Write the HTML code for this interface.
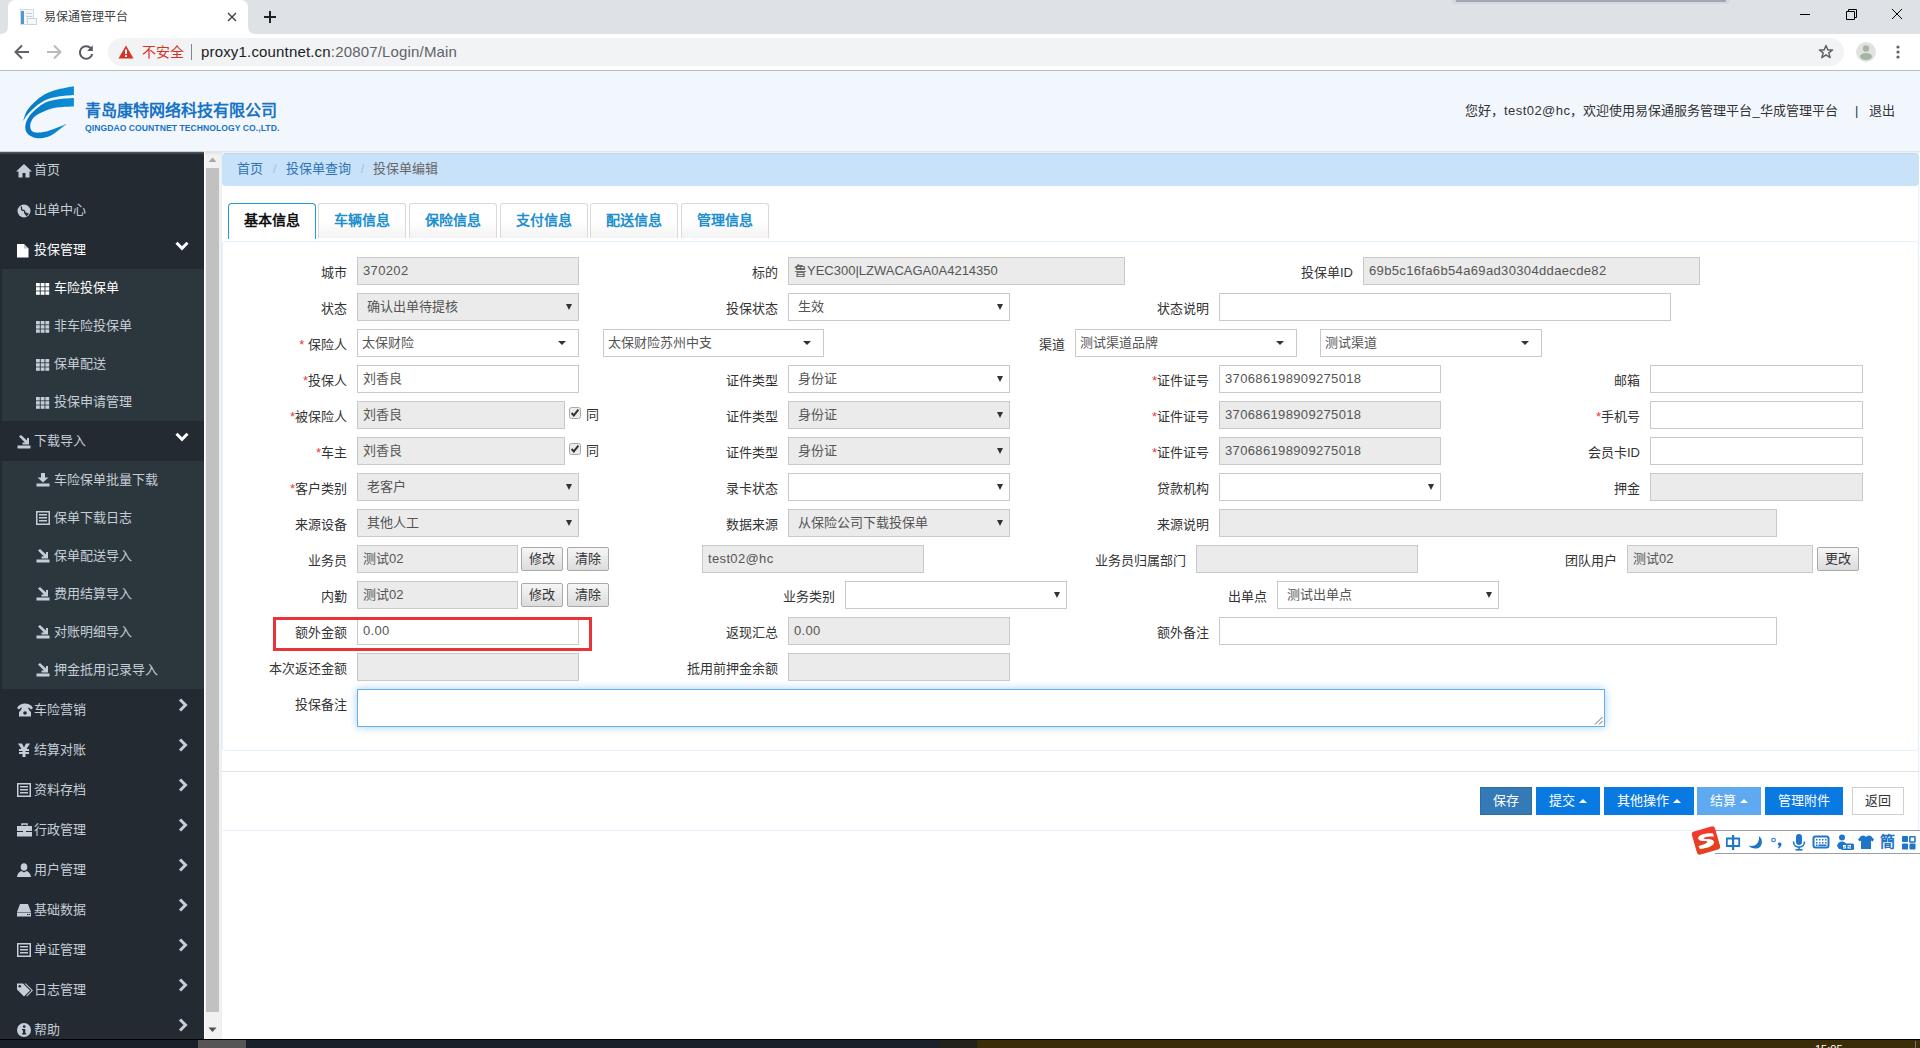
<!DOCTYPE html>
<html lang="zh-CN"><head><meta charset="utf-8"><title>易保通管理平台</title>
<style>
*{box-sizing:border-box;margin:0;padding:0}
html,body{width:1920px;height:1048px;overflow:hidden;background:#fff;font-family:"Liberation Sans",sans-serif;color:#333}
.a{position:absolute}
/* chrome */
#tabs{left:0;top:0;width:1920px;height:34px;background:#dee1e6}
#tab{left:8px;top:0;width:240px;height:34px;background:#fff;border-radius:8px 8px 0 0}
#toolbar{left:0;top:34px;width:1920px;height:36px;background:#fff}
#omni{left:108px;top:38px;width:1736px;height:28px;background:#f1f3f4;border-radius:14px}
#tbline{left:0;top:70px;width:1920px;height:1px;background:#b9bbbe}
/* header */
#hdr{left:0;top:71px;width:1920px;height:81px;background:#f2f7fe}
/* sidebar */
#side{left:0;top:152px;width:204px;height:887px;background:#232a31}
#sbar{left:204px;top:152px;width:17px;height:887px;background:#f1f1f1;border-left:1px solid #fff}
#content{left:221px;top:152px;width:1699px;height:887px;background:#fff}
#taskbar{left:0;top:1039px;width:1920px;height:9px;background:#1b212b;border-top:1px solid #000}
.mi{position:absolute;left:0;width:204px;height:40px;font-size:14px;color:#c5ccd3;line-height:40px}
.mi .ic{position:absolute;left:17px;top:13px;width:14px;height:14px}
.mi .t{position:absolute;left:34px;top:0}
.mi .chev{position:absolute;left:176px;top:0}
.sm{position:absolute;left:2px;width:202px;background:#2c363d}
.si{position:absolute;left:0;width:202px;height:38px;line-height:38px;font-size:13px;color:#c5ccd3}
.si .ic{position:absolute;left:35px;top:13px;width:12px;height:12px}
.si .t{position:absolute;left:52px;top:0}
/* form */
.lb{position:absolute;font-size:13px;color:#333;text-align:right;line-height:28px;height:28px;white-space:nowrap}
.lb i{font-style:normal;color:#e4393c}
.in{position:absolute;height:28px;border:1px solid #c9c9c9;background:#fff;font-size:13px;color:#555;line-height:26px;padding-left:5px;white-space:nowrap;overflow:hidden}
.dis{background:#ebebeb}
.sel::after{content:"";position:absolute;right:6px;top:10px;border-left:3px solid transparent;border-right:3px solid transparent;border-top:6px solid #333}
.sel2::after{content:"";position:absolute;right:12px;top:11px;border-left:4px solid transparent;border-right:4px solid transparent;border-top:4.5px solid #333}
.sel2{padding-left:4px}
.asc{letter-spacing:0.35px}
.btn{position:absolute;height:24px;border:1px solid #a9a9a9;border-radius:2px;background:linear-gradient(#f6f6f6,#dcdcdc);font-size:13px;color:#333;line-height:22px;text-align:center}
</style></head>
<body>

<div id="tabs" class="a"></div>
<svg class="a" style="left:0;top:0" width="270" height="34" viewBox="0 0 270 34">
<path d="M0 34 Q8 34 8 26 L8 8 Q8 0 16 0 L240 0 Q248 0 248 8 L248 26 Q248 34 256 34 Z" fill="#fff"/>
</svg>
<svg class="a" style="left:20px;top:9px" width="17" height="17" viewBox="0 0 17 17">
<rect x="0.5" y="0.5" width="13" height="15" fill="#f4f6f8" stroke="#d6dbe0"/>
<rect x="1" y="2" width="3" height="13" fill="#4a9ad8"/>
<rect x="6" y="4" width="6" height="1" fill="#ccd"/><rect x="6" y="7" width="6" height="1" fill="#ccd"/>
<rect x="7.5" y="9.5" width="9" height="6" fill="#f7f8fa" stroke="#ccd2d8"/>
</svg>
<div class="a" style="left:44px;top:9px;font-size:12px;color:#3c4043;line-height:16px">易保通管理平台</div>
<svg class="a" style="left:227px;top:12px" width="10" height="10" viewBox="0 0 10 10"><path d="M1 1L9 9M9 1L1 9" stroke="#3c4043" stroke-width="1.4"/></svg>
<svg class="a" style="left:263px;top:10px" width="14" height="14" viewBox="0 0 14 14"><path d="M7 1V13M1 7H13" stroke="#222" stroke-width="2"/></svg>
<svg class="a" style="left:1798px;top:8px" width="110" height="14" viewBox="0 0 110 14">
<path d="M2 6.5H12" stroke="#000" stroke-width="1"/>
<path d="M48.5 3.5H56.5V11.5H48.5Z M50.5 3.5V1.5H58.5V9.5H56.5" stroke="#000" stroke-width="1" fill="none"/>
<path d="M94 1L104 11M104 1L94 11" stroke="#000" stroke-width="1"/>
</svg>
<div class="a" style="left:1452px;top:0;width:278px;height:4px;background:#d6d7dd;border-radius:0 0 4px 4px"></div><div class="a" style="left:1456px;top:0;width:270px;height:1.5px;background:#a4a4b2"></div>
<div id="toolbar" class="a"></div>
<svg class="a" style="left:12px;top:42px" width="90" height="20" viewBox="0 0 90 20">
<path d="M17 10H4M10 3.5L3.5 10L10 16.5" stroke="#5f6368" stroke-width="2" fill="none"/>
<path d="M35 10H48M42 3.5L48.5 10L42 16.5" stroke="#b8babd" stroke-width="2" fill="none"/>
<path d="M78.8 6.2A6.3 6.3 0 1 0 80.3 12" stroke="#5a5866" stroke-width="2" fill="none"/>
<path d="M80.8 3.2V8.9H75.1Z" fill="#5a5866"/>
</svg>
<div id="omni" class="a"></div>
<svg class="a" style="left:118px;top:45px" width="16" height="14" viewBox="0 0 16 14"><path d="M8 0.5L15.5 13.5H0.5Z" fill="#d93025"/><rect x="7" y="4.5" width="2" height="4.5" fill="#fff"/><rect x="7" y="10" width="2" height="2" fill="#fff"/></svg>
<div class="a" style="left:142px;top:42px;font-size:14px;color:#d93025;line-height:20px">不安全</div>
<div class="a" style="left:191px;top:44px;width:1px;height:16px;background:#80868b"></div>
<div class="a" style="left:201px;top:42px;font-size:15px;color:#202124;line-height:20px;white-space:nowrap;letter-spacing:0.17px">proxy1.countnet.cn<span style="color:#5f6368">:20807/Login/Main</span></div>
<svg class="a" style="left:1818px;top:44px" width="16" height="16" viewBox="0 0 16 16"><path d="M8 1.5L9.9 6H14.6L10.8 8.9L12.2 13.6L8 10.8L3.8 13.6L5.2 8.9L1.4 6H6.1Z" fill="none" stroke="#5f6368" stroke-width="1.5" stroke-linejoin="round"/></svg>
<svg class="a" style="left:1856px;top:42px" width="20" height="20" viewBox="0 0 20 20"><circle cx="10" cy="10" r="10" fill="#e2e3e1"/><circle cx="10" cy="6.5" r="3.2" fill="#a7b5a5"/><ellipse cx="10" cy="14.5" rx="6" ry="3.5" fill="#a7b5a5"/></svg>
<svg class="a" style="left:1895px;top:44px" width="6" height="16" viewBox="0 0 6 16"><circle cx="3" cy="3" r="1.6" fill="#5f6368"/><circle cx="3" cy="8" r="1.6" fill="#5f6368"/><circle cx="3" cy="13" r="1.6" fill="#5f6368"/></svg>
<div id="tbline" class="a"></div>

<div id="hdr" class="a"></div>
<svg class="a" style="left:15px;top:80px" width="80" height="65" viewBox="0 0 80 65">
<defs><linearGradient id="lg" x1="0" x2="1"><stop offset="0" stop-color="#0b78c4"/><stop offset="1" stop-color="#0a8fd4"/></linearGradient></defs>
<path d="M58.9 6.2 C56.3 6.7 48.2 8.0 43.4 9.3 C38.5 10.7 33.9 12.0 29.8 14.3 C25.7 16.6 21.6 20.1 18.6 22.9 C15.6 25.7 13.6 28.0 11.8 31.0 C10.1 34.0 8.7 39.3 8.1 41.0 L8.1 41.0 C8.8 40.0 10.3 37.1 12.4 34.7 C14.5 32.3 17.4 29.2 20.5 26.7 C23.6 24.2 27.2 21.5 31.0 19.8 C34.8 18.1 38.8 17.2 43.4 16.4 C48.0 15.6 56.3 15.2 58.9 14.9 Z" fill="url(#lg)"/>
<path d="M58.9 18.0 C56.3 18.2 48.0 18.5 43.4 19.2 C38.8 19.9 34.7 20.6 31.0 22.3 C27.3 24.0 24.0 26.6 21.1 29.1 C18.2 31.6 15.4 34.6 13.6 37.2 C11.8 39.8 10.9 42.4 10.5 44.7 C10.1 47.0 10.3 49.1 10.9 50.9 C11.5 52.6 12.7 54.0 14.3 55.2 C15.9 56.4 18.2 57.4 20.5 57.9 C22.8 58.4 25.1 58.5 27.9 58.0 C30.7 57.5 33.3 57.1 37.2 54.8 C41.1 52.5 49.1 45.8 51.5 44.0 L51.5 44.0 C49.6 44.8 43.6 47.2 40.0 48.5 C36.4 49.8 33.2 51.1 30.0 51.8 C26.8 52.5 23.2 52.8 21.0 52.6 C18.8 52.4 17.5 51.7 16.5 50.5 C15.5 49.3 15.1 47.2 15.2 45.5 C15.3 43.8 16.0 41.7 17.0 40.0 C18.0 38.3 18.7 37.1 21.0 35.5 C23.3 33.9 27.3 31.9 31.0 30.5 C34.7 29.1 38.8 28.0 43.4 27.3 C48.0 26.6 56.3 26.5 58.9 26.4 Z" fill="url(#lg)"/>
</svg>
<div class="a" style="left:85px;top:101px;font-size:16px;font-weight:bold;color:#1873c4;line-height:20px;white-space:nowrap">青岛康特网络科技有限公司</div>
<div class="a" style="left:85px;top:123px;font-size:8.6px;font-weight:bold;color:#1873c4;line-height:10px;white-space:nowrap;letter-spacing:0.05px">QINGDAO COUNTNET TECHNOLOGY CO.,LTD.</div>
<div class="a" style="left:1465px;top:102px;font-size:13px;color:#333;line-height:18px;white-space:nowrap">您好，<span style="letter-spacing:0.45px">test02@hc</span>，欢迎使用易保通服务管理平台_华成管理平台</div>
<div class="a" style="left:1855px;top:102px;font-size:13px;color:#333;line-height:18px">|</div>
<div class="a" style="left:1869px;top:102px;font-size:13px;color:#333;line-height:18px">退出</div>
<div id="side" class="a"></div>
<div class="a" style="left:0;top:151px;width:204px;height:4px;background:linear-gradient(rgba(200,200,200,.9),rgba(140,140,140,.35) 40%,rgba(35,42,49,0))"></div>
<svg class="a" style="left:16px;top:164px" width="16" height="14" viewBox="0 0 16 14"><path d="M8 0L16 7.5H13.5V13.5H9.5V9H6.5V13.5H2.5V7.5H0Z" fill="#c5ced6"/></svg>
<div class="a" style="left:34px;top:161px;font-size:13px;line-height:18px;color:#c5ced6;font-weight:normal;white-space:nowrap">首页</div>
<svg class="a" style="left:17px;top:204px" width="14" height="14" viewBox="0 0 14 14"><circle cx="7" cy="7" r="6.5" fill="#c5ced6"/><path d="M4 2.5C5 3.5 4 5 5 6C6 7 7 5.5 7.5 7C8 8 7 9 8.5 10L9.5 11.5L11 10C10 9 9 9.5 8.5 8.5" fill="none" stroke="#232a31" stroke-width="1.3"/></svg>
<div class="a" style="left:34px;top:201px;font-size:13px;line-height:18px;color:#c5ced6;font-weight:normal;white-space:nowrap">出单中心</div>
<svg class="a" style="left:17px;top:244px" width="12" height="14" viewBox="0 0 12 14"><path d="M0 0H7L11.5 4.5V13.5H0Z" fill="#fff"/><path d="M7 0V4.5H11.5" fill="#8a9096" opacity=".5"/></svg>
<div class="a" style="left:34px;top:241px;font-size:13px;line-height:18px;color:#fff;font-weight:normal;white-space:nowrap">投保管理</div>
<svg class="a" style="left:175px;top:241px" width="14" height="10" viewBox="0 0 14 10"><path d="M1.5 1.8L7 7.3L12.5 1.8" stroke="#fff" stroke-width="3" fill="none"/></svg>
<div class="a" style="left:2px;top:269px;width:202px;height:152px;background:#2c363d"></div>
<svg class="a" style="left:36px;top:283px" width="14" height="13" viewBox="0 0 14 13"><rect x="0.0" y="0.0" width="3.8" height="3.4" fill="#fff"/><rect x="0.0" y="4.2" width="3.8" height="3.4" fill="#fff"/><rect x="0.0" y="8.4" width="3.8" height="3.4" fill="#fff"/><rect x="4.7" y="0.0" width="3.8" height="3.4" fill="#fff"/><rect x="4.7" y="4.2" width="3.8" height="3.4" fill="#fff"/><rect x="4.7" y="8.4" width="3.8" height="3.4" fill="#fff"/><rect x="9.4" y="0.0" width="3.8" height="3.4" fill="#fff"/><rect x="9.4" y="4.2" width="3.8" height="3.4" fill="#fff"/><rect x="9.4" y="8.4" width="3.8" height="3.4" fill="#fff"/></svg>
<div class="a" style="left:54px;top:279px;font-size:13px;line-height:18px;color:#fff;font-weight:normal;white-space:nowrap">车险投保单</div>
<svg class="a" style="left:36px;top:321px" width="14" height="13" viewBox="0 0 14 13"><rect x="0.0" y="0.0" width="3.8" height="3.4" fill="#c5ced6"/><rect x="0.0" y="4.2" width="3.8" height="3.4" fill="#c5ced6"/><rect x="0.0" y="8.4" width="3.8" height="3.4" fill="#c5ced6"/><rect x="4.7" y="0.0" width="3.8" height="3.4" fill="#c5ced6"/><rect x="4.7" y="4.2" width="3.8" height="3.4" fill="#c5ced6"/><rect x="4.7" y="8.4" width="3.8" height="3.4" fill="#c5ced6"/><rect x="9.4" y="0.0" width="3.8" height="3.4" fill="#c5ced6"/><rect x="9.4" y="4.2" width="3.8" height="3.4" fill="#c5ced6"/><rect x="9.4" y="8.4" width="3.8" height="3.4" fill="#c5ced6"/></svg>
<div class="a" style="left:54px;top:317px;font-size:13px;line-height:18px;color:#c5ced6;font-weight:normal;white-space:nowrap">非车险投保单</div>
<svg class="a" style="left:36px;top:359px" width="14" height="13" viewBox="0 0 14 13"><rect x="0.0" y="0.0" width="3.8" height="3.4" fill="#c5ced6"/><rect x="0.0" y="4.2" width="3.8" height="3.4" fill="#c5ced6"/><rect x="0.0" y="8.4" width="3.8" height="3.4" fill="#c5ced6"/><rect x="4.7" y="0.0" width="3.8" height="3.4" fill="#c5ced6"/><rect x="4.7" y="4.2" width="3.8" height="3.4" fill="#c5ced6"/><rect x="4.7" y="8.4" width="3.8" height="3.4" fill="#c5ced6"/><rect x="9.4" y="0.0" width="3.8" height="3.4" fill="#c5ced6"/><rect x="9.4" y="4.2" width="3.8" height="3.4" fill="#c5ced6"/><rect x="9.4" y="8.4" width="3.8" height="3.4" fill="#c5ced6"/></svg>
<div class="a" style="left:54px;top:355px;font-size:13px;line-height:18px;color:#c5ced6;font-weight:normal;white-space:nowrap">保单配送</div>
<svg class="a" style="left:36px;top:397px" width="14" height="13" viewBox="0 0 14 13"><rect x="0.0" y="0.0" width="3.8" height="3.4" fill="#c5ced6"/><rect x="0.0" y="4.2" width="3.8" height="3.4" fill="#c5ced6"/><rect x="0.0" y="8.4" width="3.8" height="3.4" fill="#c5ced6"/><rect x="4.7" y="0.0" width="3.8" height="3.4" fill="#c5ced6"/><rect x="4.7" y="4.2" width="3.8" height="3.4" fill="#c5ced6"/><rect x="4.7" y="8.4" width="3.8" height="3.4" fill="#c5ced6"/><rect x="9.4" y="0.0" width="3.8" height="3.4" fill="#c5ced6"/><rect x="9.4" y="4.2" width="3.8" height="3.4" fill="#c5ced6"/><rect x="9.4" y="8.4" width="3.8" height="3.4" fill="#c5ced6"/></svg>
<div class="a" style="left:54px;top:393px;font-size:13px;line-height:18px;color:#c5ced6;font-weight:normal;white-space:nowrap">投保申请管理</div>
<svg class="a" style="left:17px;top:435px" width="14" height="14" viewBox="0 0 14 14"><rect x="0.5" y="10.5" width="13" height="3" fill="#c5ced6"/><path d="M2 1.5L4 0L10 5.5V3H12V9.5H5.5V7.5H8L2 1.5Z" fill="#c5ced6"/></svg>
<div class="a" style="left:34px;top:432px;font-size:13px;line-height:18px;color:#c5ced6;font-weight:normal;white-space:nowrap">下载导入</div>
<svg class="a" style="left:175px;top:432px" width="14" height="10" viewBox="0 0 14 10"><path d="M1.5 1.8L7 7.3L12.5 1.8" stroke="#fff" stroke-width="3" fill="none"/></svg>
<div class="a" style="left:2px;top:461px;width:202px;height:228px;background:#2c363d"></div>
<svg class="a" style="left:36px;top:473px" width="14" height="14" viewBox="0 0 14 14"><rect x="0.5" y="10.5" width="13" height="3" fill="#c5ced6"/><path d="M5 0H9V4.5H12.5L7 9.5L1.5 4.5H5Z" fill="#c5ced6"/></svg>
<div class="a" style="left:54px;top:471px;font-size:13px;line-height:18px;color:#c5ced6;font-weight:normal;white-space:nowrap">车险保单批量下载</div>
<svg class="a" style="left:36px;top:511px" width="14" height="14" viewBox="0 0 14 14"><rect x="0.75" y="0.75" width="12.5" height="12.5" fill="none" stroke="#c5ced6" stroke-width="1.5"/><rect x="3" y="3" width="8" height="1.5" fill="#c5ced6"/><rect x="3" y="6" width="8" height="1.5" fill="#c5ced6"/><rect x="3" y="9" width="8" height="1.5" fill="#c5ced6"/></svg>
<div class="a" style="left:54px;top:509px;font-size:13px;line-height:18px;color:#c5ced6;font-weight:normal;white-space:nowrap">保单下载日志</div>
<svg class="a" style="left:36px;top:549px" width="14" height="14" viewBox="0 0 14 14"><rect x="0.5" y="10.5" width="13" height="3" fill="#c5ced6"/><path d="M2 1.5L4 0L10 5.5V3H12V9.5H5.5V7.5H8L2 1.5Z" fill="#c5ced6"/></svg>
<div class="a" style="left:54px;top:547px;font-size:13px;line-height:18px;color:#c5ced6;font-weight:normal;white-space:nowrap">保单配送导入</div>
<svg class="a" style="left:36px;top:587px" width="14" height="14" viewBox="0 0 14 14"><rect x="0.5" y="10.5" width="13" height="3" fill="#c5ced6"/><path d="M2 1.5L4 0L10 5.5V3H12V9.5H5.5V7.5H8L2 1.5Z" fill="#c5ced6"/></svg>
<div class="a" style="left:54px;top:585px;font-size:13px;line-height:18px;color:#c5ced6;font-weight:normal;white-space:nowrap">费用结算导入</div>
<svg class="a" style="left:36px;top:625px" width="14" height="14" viewBox="0 0 14 14"><rect x="0.5" y="10.5" width="13" height="3" fill="#c5ced6"/><path d="M2 1.5L4 0L10 5.5V3H12V9.5H5.5V7.5H8L2 1.5Z" fill="#c5ced6"/></svg>
<div class="a" style="left:54px;top:623px;font-size:13px;line-height:18px;color:#c5ced6;font-weight:normal;white-space:nowrap">对账明细导入</div>
<svg class="a" style="left:36px;top:663px" width="14" height="14" viewBox="0 0 14 14"><rect x="0.5" y="10.5" width="13" height="3" fill="#c5ced6"/><path d="M2 1.5L4 0L10 5.5V3H12V9.5H5.5V7.5H8L2 1.5Z" fill="#c5ced6"/></svg>
<div class="a" style="left:54px;top:661px;font-size:13px;line-height:18px;color:#c5ced6;font-weight:normal;white-space:nowrap">押金抵用记录导入</div>
<svg class="a" style="left:17px;top:703px" width="16" height="14" viewBox="0 0 16 14"><path d="M0 5C2 1.5 5 0.5 8 0.5C11 0.5 14 1.5 16 5L14 6.5L12 4.5L11 5L12.5 7.5H3.5L5 5L4 4.5L2 6.5Z" fill="#c5ced6"/><path d="M2 13.5V9L5 6.5H11L14 9V13.5Z" fill="#c5ced6"/><circle cx="8" cy="10" r="1.8" fill="#232a31"/></svg>
<div class="a" style="left:34px;top:701px;font-size:13px;line-height:18px;color:#c5ced6;font-weight:normal;white-space:nowrap">车险营销</div>
<svg class="a" style="left:178px;top:698px" width="10" height="14" viewBox="0 0 10 14"><path d="M2 1.5L7.5 7L2 12.5" stroke="#c5ced6" stroke-width="3" fill="none"/></svg>
<svg class="a" style="left:17px;top:743px" width="14" height="14" viewBox="0 0 14 14"><path d="M1 0.5H5L7 4.5L9 0.5H13L9.5 6H12V8H8.5V9H12V11H8.5V14H5.5V11H2V9H5.5V8H2V6H4.5Z" fill="#c5ced6"/></svg>
<div class="a" style="left:34px;top:741px;font-size:13px;line-height:18px;color:#c5ced6;font-weight:normal;white-space:nowrap">结算对账</div>
<svg class="a" style="left:178px;top:738px" width="10" height="14" viewBox="0 0 10 14"><path d="M2 1.5L7.5 7L2 12.5" stroke="#c5ced6" stroke-width="3" fill="none"/></svg>
<svg class="a" style="left:17px;top:783px" width="14" height="14" viewBox="0 0 14 14"><rect x="0.75" y="0.75" width="12.5" height="12.5" fill="none" stroke="#c5ced6" stroke-width="1.5"/><rect x="3" y="3" width="8" height="1.5" fill="#c5ced6"/><rect x="3" y="6" width="8" height="1.5" fill="#c5ced6"/><rect x="3" y="9" width="8" height="1.5" fill="#c5ced6"/></svg>
<div class="a" style="left:34px;top:781px;font-size:13px;line-height:18px;color:#c5ced6;font-weight:normal;white-space:nowrap">资料存档</div>
<svg class="a" style="left:178px;top:778px" width="10" height="14" viewBox="0 0 10 14"><path d="M2 1.5L7.5 7L2 12.5" stroke="#c5ced6" stroke-width="3" fill="none"/></svg>
<svg class="a" style="left:17px;top:823px" width="15" height="14" viewBox="0 0 15 14"><path d="M5 2.5V1H10V2.5" stroke="#c5ced6" stroke-width="1.5" fill="none"/><rect x="0" y="3" width="15" height="5" fill="#c5ced6"/><rect x="0" y="9" width="15" height="4.5" fill="#c5ced6"/><rect x="6" y="7" width="3" height="3" fill="#c5ced6"/></svg>
<div class="a" style="left:34px;top:821px;font-size:13px;line-height:18px;color:#c5ced6;font-weight:normal;white-space:nowrap">行政管理</div>
<svg class="a" style="left:178px;top:818px" width="10" height="14" viewBox="0 0 10 14"><path d="M2 1.5L7.5 7L2 12.5" stroke="#c5ced6" stroke-width="3" fill="none"/></svg>
<svg class="a" style="left:17px;top:863px" width="14" height="14" viewBox="0 0 14 14"><ellipse cx="7" cy="4" rx="3.3" ry="3.8" fill="#c5ced6"/><path d="M0 14C0.5 10 3 8.5 4.5 8L7 9.5L9.5 8C11 8.5 13.5 10 14 14Z" fill="#c5ced6"/></svg>
<div class="a" style="left:34px;top:861px;font-size:13px;line-height:18px;color:#c5ced6;font-weight:normal;white-space:nowrap">用户管理</div>
<svg class="a" style="left:178px;top:858px" width="10" height="14" viewBox="0 0 10 14"><path d="M2 1.5L7.5 7L2 12.5" stroke="#c5ced6" stroke-width="3" fill="none"/></svg>
<svg class="a" style="left:17px;top:903px" width="14" height="14" viewBox="0 0 14 14"><path d="M3 1H11L14 9H0Z" fill="#c5ced6"/><rect x="0" y="9.5" width="14" height="4" fill="#c5ced6"/><rect x="10" y="11" width="1.5" height="1" fill="#232a31"/><rect x="12" y="11" width="1" height="1" fill="#232a31"/></svg>
<div class="a" style="left:34px;top:901px;font-size:13px;line-height:18px;color:#c5ced6;font-weight:normal;white-space:nowrap">基础数据</div>
<svg class="a" style="left:178px;top:898px" width="10" height="14" viewBox="0 0 10 14"><path d="M2 1.5L7.5 7L2 12.5" stroke="#c5ced6" stroke-width="3" fill="none"/></svg>
<svg class="a" style="left:17px;top:943px" width="14" height="14" viewBox="0 0 14 14"><rect x="0.75" y="0.75" width="12.5" height="12.5" fill="none" stroke="#c5ced6" stroke-width="1.5"/><rect x="3" y="3" width="8" height="1.5" fill="#c5ced6"/><rect x="3" y="6" width="8" height="1.5" fill="#c5ced6"/><rect x="3" y="9" width="8" height="1.5" fill="#c5ced6"/></svg>
<div class="a" style="left:34px;top:941px;font-size:13px;line-height:18px;color:#c5ced6;font-weight:normal;white-space:nowrap">单证管理</div>
<svg class="a" style="left:178px;top:938px" width="10" height="14" viewBox="0 0 10 14"><path d="M2 1.5L7.5 7L2 12.5" stroke="#c5ced6" stroke-width="3" fill="none"/></svg>
<svg class="a" style="left:17px;top:983px" width="17" height="15" viewBox="0 0 17 15"><path d="M0 0.5H6L13 7.5L7 13.5L0 6.5Z" fill="#c5ced6"/><circle cx="2.8" cy="3.3" r="1.3" fill="#232a31"/><path d="M7.5 0.5H9L16 7.5L10 13.5L9.3 12.8L14.6 7.5Z" fill="#c5ced6"/></svg>
<div class="a" style="left:34px;top:981px;font-size:13px;line-height:18px;color:#c5ced6;font-weight:normal;white-space:nowrap">日志管理</div>
<svg class="a" style="left:178px;top:978px" width="10" height="14" viewBox="0 0 10 14"><path d="M2 1.5L7.5 7L2 12.5" stroke="#c5ced6" stroke-width="3" fill="none"/></svg>
<svg class="a" style="left:17px;top:1023px" width="14" height="14" viewBox="0 0 14 14"><circle cx="7" cy="7" r="7" fill="#c5ced6"/><circle cx="7.2" cy="3.6" r="1.3" fill="#232a31"/><path d="M5 6H8.3V10.3H9.3V11.5H5V10.3H6V7.2H5Z" fill="#232a31"/></svg>
<div class="a" style="left:34px;top:1021px;font-size:13px;line-height:18px;color:#c5ced6;font-weight:normal;white-space:nowrap">帮助</div>
<svg class="a" style="left:178px;top:1018px" width="10" height="14" viewBox="0 0 10 14"><path d="M2 1.5L7.5 7L2 12.5" stroke="#c5ced6" stroke-width="3" fill="none"/></svg>
<div id="sbar" class="a"></div>
<div class="a" style="left:204px;top:152px;width:1px;height:887px;background:#fff"></div>
<div class="a" style="left:205px;top:152px;width:16px;height:887px;background:#f1f1f1"></div>
<svg class="a" style="left:208px;top:157px" width="9" height="6" viewBox="0 0 9 6"><path d="M4.5 0.5L8.5 5H0.5Z" fill="#a3a8a3"/></svg>
<div class="a" style="left:206px;top:168px;width:13px;height:844px;background:#c1c1c1"></div>
<svg class="a" style="left:208px;top:1027px" width="9" height="6" viewBox="0 0 9 6"><path d="M0.5 0.5H8.5L4.5 5Z" fill="#505050"/></svg>
<div class="a" style="left:221px;top:152px;width:1px;height:887px;background:#e6f0fa"></div>
<div class="a" style="left:222px;top:153px;width:1697px;height:33px;background:#c8e2fa;border-radius:4px"></div>
<div class="a" style="left:205px;top:151px;width:1715px;height:4px;background:linear-gradient(rgba(110,110,110,.16),rgba(110,110,110,0))"></div>
<div class="a" style="left:237px;top:160px;font-size:13px;line-height:18px;white-space:nowrap;color:#2f73b5">首页<span style="color:#b0bfcc;padding:0 9px 0 10px">/</span>投保单查询<span style="color:#b0bfcc;padding:0 9px 0 10px">/</span><span style="color:#666">投保单编辑</span></div>
<div class="a" style="left:221px;top:186px;width:1698px;height:645px;border:1px solid #e6f0fb;border-top:none;border-left:none;border-radius:0 0 4px 0"></div>
<div class="a" style="left:228px;top:203px;width:88px;height:36px;border:1.5px solid #229bd6;border-bottom:none;border-radius:4px 4px 0 0;background:#fff;font-size:14px;font-weight:bold;color:#111;text-align:center;line-height:33px">基本信息</div>
<div class="a" style="left:318px;top:203px;width:88px;height:35px;border:1px solid #d9d9d9;border-bottom:none;border-radius:3px 3px 0 0;background:linear-gradient(#fff 0,#fff 50%,#f3f3f3 100%);font-size:14px;font-weight:bold;color:#1f8fcf;text-align:center;line-height:32px">车辆信息</div>
<div class="a" style="left:409px;top:203px;width:88px;height:35px;border:1px solid #d9d9d9;border-bottom:none;border-radius:3px 3px 0 0;background:linear-gradient(#fff 0,#fff 50%,#f3f3f3 100%);font-size:14px;font-weight:bold;color:#1f8fcf;text-align:center;line-height:32px">保险信息</div>
<div class="a" style="left:500px;top:203px;width:88px;height:35px;border:1px solid #d9d9d9;border-bottom:none;border-radius:3px 3px 0 0;background:linear-gradient(#fff 0,#fff 50%,#f3f3f3 100%);font-size:14px;font-weight:bold;color:#1f8fcf;text-align:center;line-height:32px">支付信息</div>
<div class="a" style="left:590px;top:203px;width:88px;height:35px;border:1px solid #d9d9d9;border-bottom:none;border-radius:3px 3px 0 0;background:linear-gradient(#fff 0,#fff 50%,#f3f3f3 100%);font-size:14px;font-weight:bold;color:#1f8fcf;text-align:center;line-height:32px">配送信息</div>
<div class="a" style="left:681px;top:203px;width:88px;height:35px;border:1px solid #d9d9d9;border-bottom:none;border-radius:3px 3px 0 0;background:linear-gradient(#fff 0,#fff 50%,#f3f3f3 100%);font-size:14px;font-weight:bold;color:#1f8fcf;text-align:center;line-height:32px">管理信息</div>
<div class="a" style="left:222px;top:241px;width:1697px;height:510px;border:1px solid #e3effb;border-radius:4px"></div>
<div class="a" style="left:222px;top:771px;width:1697px;height:1px;background:#e2e2e2"></div>
<div class="lb" style="right:1573px;top:259px">城市</div>
<div class="asc in dis" style="left:357px;top:257px;width:222px;height:28px;">370202</div>
<div class="lb" style="right:1142px;top:259px">标的</div>
<div class="in dis" style="left:788px;top:257px;width:337px;height:28px;">鲁YEC300|LZWACAGA0A4214350</div>
<div class="lb" style="right:567px;top:259px">投保单ID</div>
<div class="asc in dis" style="left:1363px;top:257px;width:337px;height:28px;">69b5c16fa6b54a69ad30304ddaecde82</div>
<div class="lb" style="right:1573px;top:295px">状态</div>
<div class="in dis sel" style="left:357px;top:293px;width:222px;height:28px;padding-left:9px;">确认出单待提核</div>
<div class="lb" style="right:1142px;top:295px">投保状态</div>
<div class="in sel" style="left:788px;top:293px;width:222px;height:28px;padding-left:9px;">生效</div>
<div class="lb" style="right:711px;top:295px">状态说明</div>
<div class="in" style="left:1219px;top:293px;width:452px;height:28px;"></div>
<div class="lb" style="right:1573px;top:331px"><i>*</i> 保险人</div>
<div class="in sel2" style="left:357px;top:329px;width:222px;height:28px;">太保财险</div>
<div class="in sel2" style="left:603px;top:329px;width:221px;height:28px;">太保财险苏州中支</div>
<div class="lb" style="right:855px;top:331px">渠道</div>
<div class="in sel2" style="left:1075px;top:329px;width:222px;height:28px;">测试渠道品牌</div>
<div class="in sel2" style="left:1320px;top:329px;width:222px;height:28px;">测试渠道</div>
<div class="lb" style="right:1573px;top:367px"><i>*</i>投保人</div>
<div class="in" style="left:357px;top:365px;width:222px;height:28px;">刘香良</div>
<div class="lb" style="right:1142px;top:367px">证件类型</div>
<div class="in sel" style="left:788px;top:365px;width:222px;height:28px;padding-left:9px;">身份证</div>
<div class="lb" style="right:711px;top:367px"><i>*</i>证件证号</div>
<div class="asc in" style="left:1219px;top:365px;width:222px;height:28px;">370686198909275018</div>
<div class="lb" style="right:280px;top:367px">邮箱</div>
<div class="in" style="left:1650px;top:365px;width:213px;height:28px;"></div>
<div class="lb" style="right:1573px;top:403px"><i>*</i>被保险人</div>
<div class="in dis" style="left:357px;top:401px;width:208px;height:28px;">刘香良</div>
<svg class="a" style="left:569px;top:407px" width="12" height="12" viewBox="0 0 12 12"><rect x="0.5" y="0.5" width="11" height="11" rx="2" fill="#ececec" stroke="#a5aaa5"/><path d="M2.6 6L4.8 8.4L9.4 2.6" stroke="#333" stroke-width="2" fill="none"/></svg><div class="a" style="left:586px;top:405px;font-size:13px;line-height:20px;color:#333">同</div>
<div class="lb" style="right:1142px;top:403px">证件类型</div>
<div class="in dis sel" style="left:788px;top:401px;width:222px;height:28px;padding-left:9px;">身份证</div>
<div class="lb" style="right:711px;top:403px"><i>*</i>证件证号</div>
<div class="asc in dis" style="left:1219px;top:401px;width:222px;height:28px;">370686198909275018</div>
<div class="lb" style="right:280px;top:403px"><i>*</i>手机号</div>
<div class="in" style="left:1650px;top:401px;width:213px;height:28px;"></div>
<div class="lb" style="right:1573px;top:439px"><i>*</i>车主</div>
<div class="in dis" style="left:357px;top:437px;width:208px;height:28px;">刘香良</div>
<svg class="a" style="left:569px;top:443px" width="12" height="12" viewBox="0 0 12 12"><rect x="0.5" y="0.5" width="11" height="11" rx="2" fill="#ececec" stroke="#a5aaa5"/><path d="M2.6 6L4.8 8.4L9.4 2.6" stroke="#333" stroke-width="2" fill="none"/></svg><div class="a" style="left:586px;top:441px;font-size:13px;line-height:20px;color:#333">同</div>
<div class="lb" style="right:1142px;top:439px">证件类型</div>
<div class="in dis sel" style="left:788px;top:437px;width:222px;height:28px;padding-left:9px;">身份证</div>
<div class="lb" style="right:711px;top:439px"><i>*</i>证件证号</div>
<div class="asc in dis" style="left:1219px;top:437px;width:222px;height:28px;">370686198909275018</div>
<div class="lb" style="right:280px;top:439px">会员卡ID</div>
<div class="in" style="left:1650px;top:437px;width:213px;height:28px;"></div>
<div class="lb" style="right:1573px;top:475px"><i>*</i>客户类别</div>
<div class="in dis sel" style="left:357px;top:473px;width:222px;height:28px;padding-left:9px;">老客户</div>
<div class="lb" style="right:1142px;top:475px">录卡状态</div>
<div class="in sel" style="left:788px;top:473px;width:222px;height:28px;padding-left:9px;"></div>
<div class="lb" style="right:711px;top:475px">贷款机构</div>
<div class="in sel" style="left:1219px;top:473px;width:222px;height:28px;padding-left:9px;"></div>
<div class="lb" style="right:280px;top:475px">押金</div>
<div class="in dis" style="left:1650px;top:473px;width:213px;height:28px;"></div>
<div class="lb" style="right:1573px;top:511px">来源设备</div>
<div class="in dis sel" style="left:357px;top:509px;width:222px;height:28px;padding-left:9px;">其他人工</div>
<div class="lb" style="right:1142px;top:511px">数据来源</div>
<div class="in dis sel" style="left:788px;top:509px;width:222px;height:28px;padding-left:9px;">从保险公司下载投保单</div>
<div class="lb" style="right:711px;top:511px">来源说明</div>
<div class="in dis" style="left:1219px;top:509px;width:558px;height:28px;"></div>
<div class="lb" style="right:1573px;top:547px">业务员</div>
<div class="in dis" style="left:357px;top:545px;width:161px;height:28px;">测试02</div>
<div class="btn" style="left:521px;top:547px;width:42px">修改</div>
<div class="btn" style="left:567px;top:547px;width:42px">清除</div>
<div class="asc in dis" style="left:702px;top:545px;width:222px;height:28px;">test02@hc</div>
<div class="lb" style="right:734px;top:547px">业务员归属部门</div>
<div class="in dis" style="left:1196px;top:545px;width:222px;height:28px;"></div>
<div class="lb" style="right:303px;top:547px">团队用户</div>
<div class="in dis" style="left:1627px;top:545px;width:186px;height:28px;">测试02</div>
<div class="btn" style="left:1817px;top:547px;width:42px">更改</div>
<div class="lb" style="right:1573px;top:583px">内勤</div>
<div class="in dis" style="left:357px;top:581px;width:161px;height:28px;">测试02</div>
<div class="btn" style="left:521px;top:583px;width:42px">修改</div>
<div class="btn" style="left:567px;top:583px;width:42px">清除</div>
<div class="lb" style="right:1085px;top:583px">业务类别</div>
<div class="in sel" style="left:845px;top:581px;width:222px;height:28px;padding-left:9px;"></div>
<div class="lb" style="right:653px;top:583px">出单点</div>
<div class="in sel" style="left:1277px;top:581px;width:222px;height:28px;padding-left:9px;">测试出单点</div>
<div class="lb" style="right:1573px;top:619px">额外金额</div>
<div class="asc in" style="left:357px;top:617px;width:222px;height:28px;">0.00</div>
<div class="lb" style="right:1142px;top:619px">返现汇总</div>
<div class="asc in dis" style="left:788px;top:617px;width:222px;height:28px;">0.00</div>
<div class="lb" style="right:711px;top:619px">额外备注</div>
<div class="in" style="left:1219px;top:617px;width:558px;height:28px;"></div>
<div class="a" style="left:273px;top:617px;width:319px;height:34px;border:3px solid #e8333b"></div>
<div class="lb" style="right:1573px;top:655px">本次返还金额</div>
<div class="in dis" style="left:357px;top:653px;width:222px;height:28px;"></div>
<div class="lb" style="right:1142px;top:655px">抵用前押金余额</div>
<div class="in dis" style="left:788px;top:653px;width:222px;height:28px;"></div>
<div class="lb" style="right:1573px;top:691px">投保备注</div>
<div class="a" style="left:357px;top:689px;width:1248px;height:38px;border:1px solid #66afe9;box-shadow:0 0 8px rgba(102,175,233,.6);background:#fff"></div>
<svg class="a" style="left:1594px;top:716px" width="9" height="9" viewBox="0 0 9 9"><path d="M8.5 1L1 8.5M8.5 5L5 8.5" stroke="#666" stroke-width="1"/></svg>
<div class="a" style="left:1480px;top:787px;width:52px;height:28px;background:#337ab7;border:1px solid #2e6da4;line-height:26px !important;font-size:13px;color:#fff;text-align:center;line-height:28px;white-space:nowrap">保存</div>
<div class="a" style="left:1536px;top:787px;width:64px;height:28px;background:#0a7ae3;font-size:13px;color:#fff;text-align:center;line-height:28px;white-space:nowrap">提交<span style="display:inline-block;margin-left:4px;vertical-align:2px;border-left:4px solid transparent;border-right:4px solid transparent;border-bottom:4px solid #fff"></span></div>
<div class="a" style="left:1604px;top:787px;width:90px;height:28px;background:#0a7ae3;font-size:13px;color:#fff;text-align:center;line-height:28px;white-space:nowrap">其他操作<span style="display:inline-block;margin-left:4px;vertical-align:2px;border-left:4px solid transparent;border-right:4px solid transparent;border-bottom:4px solid #fff"></span></div>
<div class="a" style="left:1697px;top:787px;width:64px;height:28px;background:#5ea9f0;font-size:13px;color:#fff;text-align:center;line-height:28px;white-space:nowrap">结算<span style="display:inline-block;margin-left:4px;vertical-align:2px;border-left:4px solid transparent;border-right:4px solid transparent;border-bottom:4px solid #fff"></span></div>
<div class="a" style="left:1765px;top:787px;width:78px;height:28px;background:#0a7ae3;font-size:13px;color:#fff;text-align:center;line-height:28px;white-space:nowrap">管理附件</div>
<div class="a" style="left:1852px;top:787px;width:52px;height:28px;background:#fff;border:1px solid #cfcfcf;font-size:13px;color:#333;text-align:center;line-height:26px;white-space:nowrap">返回</div>

<div class="a" style="left:1715px;top:830px;width:205px;height:24px;background:#fff;border-top:1.5px solid #9a9da3;border-bottom:1.5px solid #9a9da3"></div>
<svg class="a" style="left:1690px;top:825px" width="32" height="31" viewBox="0 0 32 31">
<defs><linearGradient id="sg" x1="0" y1="0" x2="0" y2="1"><stop offset="0" stop-color="#f5372f"/><stop offset="1" stop-color="#e2421c"/></linearGradient></defs>
<g transform="rotate(-16 16 15.5)"><rect x="4" y="3.5" width="24" height="24" rx="3" fill="url(#sg)"/></g>
<path d="M23 8.5C19 8 11 8.5 8.5 12C7 14.5 10 16 14 16C18 16 19 17.5 13.5 19.5C11 20.3 9 21 8.5 21.5L10 24C16 23.5 23 21.5 24 18C24.5 15 21 14 17 14C13 14 12.5 13 16.5 12C18.5 11.5 21 11.5 24 11.5Z" fill="#fff"/>
</svg>
<svg class="a" style="left:1726px;top:834px" width="192" height="18" viewBox="0 0 192 18">
<g fill="#1f76c8">
<rect x="6" y="1" width="2.2" height="15"/>
<path d="M0.8 4.5H13.2V12H0.8Z" fill="none" stroke="#1f76c8" stroke-width="1.8"/>
<path d="M32.7 2C36.5 4 37 10 34 13C31 15.5 25 15 22.7 11.6C26.5 12.5 30 11.5 31.5 9C33 6.5 33.5 4 32.7 2Z"/>
<circle cx="47.5" cy="6" r="1.8" fill="none" stroke="#1f76c8" stroke-width="1.1"/>
<path d="M53.5 8.5C55.5 8.5 56 10 55 12C54 13.5 53 14 52 14.5L51.8 14C52.5 13.2 53 12.5 53 11.5C52 11.3 51.5 10.5 51.8 9.7C52 9 52.7 8.5 53.5 8.5Z"/>
<rect x="70" y="0" width="6" height="11" rx="3"/>
<path d="M67.5 7.5C67.5 11 70 13 73 13C76 13 78.5 11 78.5 7.5" fill="none" stroke="#1f76c8" stroke-width="1.6"/>
<rect x="72.2" y="13" width="1.6" height="3"/><rect x="69.5" y="15" width="7" height="1.6"/>
<rect x="87.5" y="2.5" width="15" height="11" rx="2" fill="none" stroke="#1f76c8" stroke-width="2"/>
<rect x="90" y="5" width="1.5" height="1.5"/><rect x="93" y="5" width="1.5" height="1.5"/><rect x="96" y="5" width="1.5" height="1.5"/><rect x="99" y="5" width="1.5" height="1.5"/>
<rect x="90" y="8" width="1.5" height="1.5"/><rect x="93" y="8" width="1.5" height="1.5"/><rect x="96" y="8" width="1.5" height="1.5"/><rect x="99" y="8" width="1.5" height="1.5"/>
<rect x="90" y="10.5" width="1.5" height="1.5"/><rect x="92.5" y="10.5" width="8" height="1.5"/>
<circle cx="116" cy="3.5" r="3"/>
<path d="M111 12C111.5 9 113.5 7.5 116 7.5C118 7.5 119.5 8.5 120 9.5L119 15H113Z"/>
<rect x="115" y="9.5" width="13" height="6.5" rx="1.5"/>
<path d="M117 11H120V12.2H118.3V12.8H120V14.6H117V13.8H118.8V13.2H117Z M121.5 11H125V12.8H122.8V13.4H125V14.6H121.5V12.6H123.8V11.8H121.5Z" fill="#fff"/>
<path d="M135 2L138 1.5C139 3 141 3 142 1.5L145 2L148 5.5L146.5 7.5L145 6.5V15H135V6.5L133.5 7.5L132 5.5Z"/>
</g>
</svg>
<div class="a" style="left:1880px;top:833px;font-size:15px;line-height:18px;color:#1f76c8;font-weight:bold">簡</div>
<svg class="a" style="left:1902px;top:836px" width="14" height="14" viewBox="0 0 14 14"><g fill="#1f76c8"><rect x="0" y="0" width="6" height="6" rx="0.8"/><rect x="7.8" y="0.8" width="5.2" height="5.2" rx="0.5" fill="none" stroke="#1f76c8" stroke-width="1.6"/><rect x="0" y="7.5" width="6" height="6" rx="0.8"/><rect x="7.5" y="7.5" width="6" height="6" rx="0.8"/></g></svg>
<div class="a" style="left:0;top:1039px;width:1920px;height:1px;background:#000"></div>
<div class="a" style="left:0;top:1040px;width:940px;height:8px;background:#1b212b"></div>
<div class="a" style="left:198px;top:1040px;width:48px;height:8px;background:#555"></div>
<div class="a" style="left:940px;top:1040px;width:37px;height:8px;background:#24231a"></div>
<div class="a" style="left:977px;top:1040px;width:943px;height:8px;background:#3a2d08"></div>
<div class="a" style="left:1815px;top:1043px;font-size:11px;line-height:12px;color:#fff">15:05</div>
<div class="a" style="left:1915px;top:1041px;width:1px;height:7px;background:#777"></div>
</body></html>
